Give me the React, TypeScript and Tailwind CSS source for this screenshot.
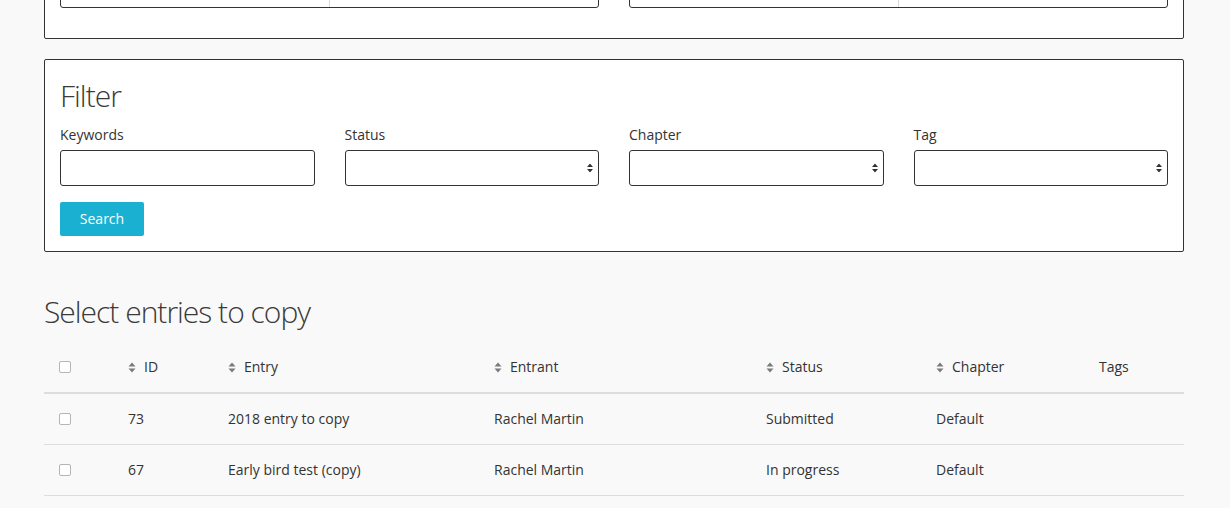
import React from "react";

function SortIcon() {
  return (
    <svg width="8" height="11" viewBox="0 0 8 11" className="mr-[8px] shrink-0">
      <path d="M0.5 4.5L4 0.5L7.5 4.5Z M0.5 6.5L4 10.5L7.5 6.5Z" fill="#7a7a7a" />
    </svg>
  );
}

function SelectArrow() {
  return (
    <svg width="6" height="9" viewBox="0 0 6 9" className="absolute right-[5px] top-1/2 -translate-y-1/2">
      <path d="M0 3.6L3 0L6 3.6Z M0 5.4L3 9L6 5.4Z" fill="#333" />
    </svg>
  );
}

function Checkbox() {
  return <span className="block w-[12px] h-[12px] rounded-[2px] border border-[#b5b5b5] bg-white" />;
}

function Field({ label, select }: { label: string; select?: boolean }) {
  return (
    <div className="flex flex-col">
      <label className="text-[14px] leading-[20px] text-[#333] mb-[5px]">{label}</label>
      <div className="relative h-[36px] rounded-[3px] border border-[#333] bg-white">
        {select && <SelectArrow />}
      </div>
    </div>
  );
}

const rows = [
  { id: "73", entry: "2018 entry to copy", entrant: "Rachel Martin", status: "Submitted", chapter: "Default" },
  { id: "67", entry: "Early bird test (copy)", entrant: "Rachel Martin", status: "In progress", chapter: "Default" },
];

export default function App() {
  return (
    <div className="min-h-[508px] bg-[#f9f9f9] overflow-hidden font-['Open_Sans',sans-serif] text-[#333]">
      <div className="ml-[44px] w-[1140px]">
        {/* Top panel (cut off) */}
        <div className="-mt-[50px] bg-white border border-[#333] rounded-[2px] px-[15px] pt-[21px] pb-[30px]">
          <div className="grid grid-cols-2 gap-[30px]">
            <div className="flex h-[36px] rounded-[3px] border border-[#333] bg-white">
              <div className="flex-1" />
              <div className="w-px bg-[#d8d8d8]" />
              <div className="flex-1" />
            </div>
            <div className="flex h-[36px] rounded-[3px] border border-[#333] bg-white">
              <div className="flex-1" />
              <div className="w-px bg-[#d8d8d8]" />
              <div className="flex-1" />
            </div>
          </div>
        </div>

        {/* Filter panel */}
        <div className="mt-[20px] bg-white border border-[#333] rounded-[2px] px-[15px] pt-[19px] pb-[15px]">
          <h3 className="text-[30px] leading-[33px] font-light tracking-[-1px] text-[#3a3a3a] mb-[13px]">Filter</h3>
          <div className="grid grid-cols-4 gap-[30px]">
            <Field label="Keywords" />
            <Field label="Status" select />
            <Field label="Chapter" select />
            <Field label="Tag" select />
          </div>
          <button className="mt-[16px] h-[34px] w-[84px] rounded-[2px] bg-[#1ab0d2] text-white text-[14px] leading-[20px]">
            Search
          </button>
        </div>

        {/* Entries */}
        <h3 className="mt-[43px] text-[30px] leading-[33px] font-light tracking-[-1px] text-[#3a3a3a] mb-[14px]">
          Select entries to copy
        </h3>
        <table className="w-[1140px] table-fixed border-collapse text-[14px] leading-[20px] text-[#333]">
          <colgroup>
            <col className="w-[69px]" />
            <col className="w-[100px]" />
            <col className="w-[266px]" />
            <col className="w-[272px]" />
            <col className="w-[170px]" />
            <col className="w-[163px]" />
            <col className="w-[100px]" />
          </colgroup>
          <thead>
            <tr className="border-b-2 border-[#dddddd]">
              <th className="pl-[15px] py-[15px] text-left font-normal align-middle"><Checkbox /></th>
              {["ID", "Entry", "Entrant", "Status", "Chapter"].map((h) => (
                <th key={h} className="pl-[15px] py-[15px] text-left font-normal align-middle">
                  <span className="flex items-center"><SortIcon />{h}</span>
                </th>
              ))}
              <th className="pl-[15px] py-[15px] text-left font-normal align-middle">Tags</th>
            </tr>
          </thead>
          <tbody>
            {rows.map((r) => (
              <tr key={r.id} className="border-b border-[#dddddd]">
                <td className="pl-[15px] py-[15px] align-middle"><Checkbox /></td>
                <td className="pl-[15px] py-[15px]">{r.id}</td>
                <td className="pl-[15px] py-[15px]">{r.entry}</td>
                <td className="pl-[15px] py-[15px]">{r.entrant}</td>
                <td className="pl-[15px] py-[15px]">{r.status}</td>
                <td className="pl-[15px] py-[15px]">{r.chapter}</td>
                <td className="pl-[15px] py-[15px]"></td>
              </tr>
            ))}
          </tbody>
        </table>
      </div>
    </div>
  );
}
